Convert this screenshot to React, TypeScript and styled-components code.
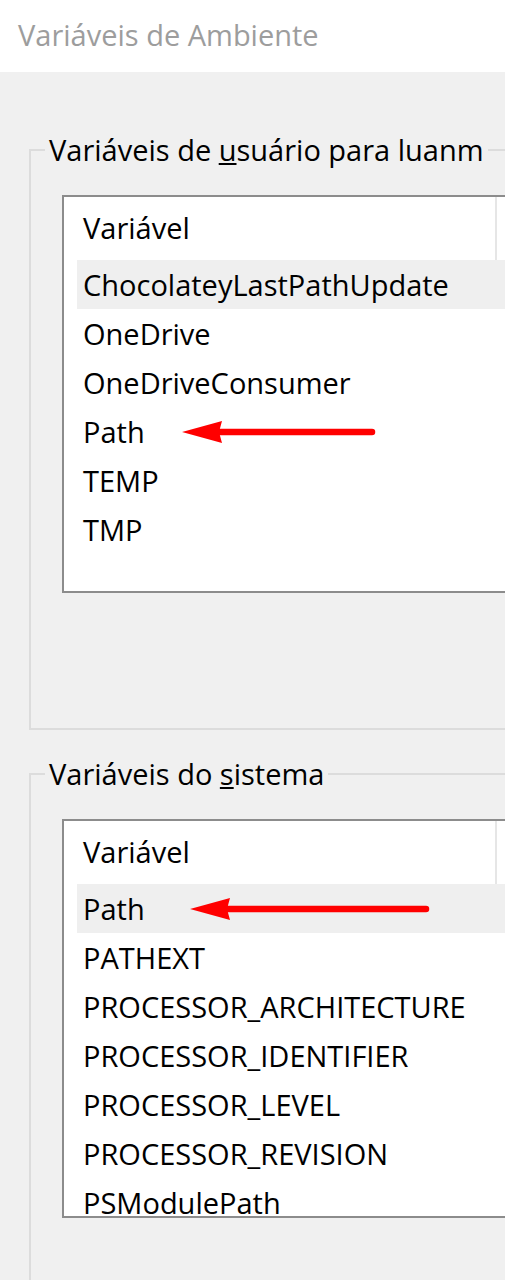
import React from 'react'
import styled, { createGlobalStyle } from 'styled-components'

const GlobalStyle = createGlobalStyle`
  html, body {
    margin: 0;
    padding: 0;
    background: #f0f0f0;
    overflow: hidden;
  }
  body {
    font-family: 'Open Sans', 'Noto Sans', sans-serif;
    color: #000;
  }
`

const Window = styled.div`
  width: 505px;
  height: 1280px;
  overflow: hidden;
  background: #f0f0f0;
`

const TitleBar = styled.div`
  height: 72px;
  background: #fff;
  display: flex;
  align-items: center;
  padding-left: 18px;
  font-size: 29px;
  color: #9d9d9d;
  box-sizing: border-box;
  padding-bottom: 4px;
`

const Body = styled.div`
  padding-top: 60px;
  display: flex;
  flex-direction: column;
  gap: 26px;
`

const GroupBox = styled.fieldset`
  margin: 0 -300px 0 29px;
  border: 2px solid #dcdcdc;
  padding: 27px 0 135px 31px;
  min-width: 0;
`

const Legend = styled.legend`
  margin-left: -17px;
  padding: 0 4px;
  font-size: 29px;
  line-height: 36px;
  white-space: nowrap;
`

type ListViewProps = {
  $height: number
}

const ListView = styled.div<ListViewProps>`
  height: ${ (props) => props.$height }px;
  box-sizing: border-box;
  border: 2px solid #8c8c8c;
  background: #fff;
  overflow: hidden;
`

const Header = styled.div`
  height: 63px;
  display: flex;
  align-items: stretch;
`

const HeaderCell = styled.div`
  width: 433px;
  flex: none;
  display: flex;
  align-items: center;
  padding-left: 19px;
  padding-bottom: 2px;
  box-sizing: border-box;
  border-right: 2px solid #e6e6e6;
  font-size: 29px;
`

const Rows = styled.div`
  padding-left: 13px;
`

type RowProps = {
  $selected?: boolean
}

const Row = styled.div<RowProps>`
  position: relative;
  height: 49px;
  display: flex;
  align-items: center;
  padding-left: 6px;
  font-size: 29px;
  white-space: nowrap;
  background: ${ (props) => props.$selected ? '#efefef' : 'transparent' };
`

const Arrow = styled.svg`
  position: absolute;
  top: 50%;
  transform: translateY(-50%);
  height: 24px;
`

type Variable = {
  name: string
  selected?: boolean
  arrow?: { left: number, width: number }
}

const userVariables: Variable[] = [
  { name: 'ChocolateyLastPathUpdate', selected: true },
  { name: 'OneDrive' },
  { name: 'OneDriveConsumer' },
  { name: 'Path', arrow: { left: 105, width: 194 } },
  { name: 'TEMP' },
  { name: 'TMP' },
]

const systemVariables: Variable[] = [
  { name: 'Path', selected: true, arrow: { left: 113, width: 240 } },
  { name: 'PATHEXT' },
  { name: 'PROCESSOR_ARCHITECTURE' },
  { name: 'PROCESSOR_IDENTIFIER' },
  { name: 'PROCESSOR_LEVEL' },
  { name: 'PROCESSOR_REVISION' },
  { name: 'PSModulePath' },
]

const RedArrow = ({ left, width }: { left: number, width: number }) => (
  <Arrow style={ { left, width } } viewBox={ `0 0 ${ width } 24` }>
    <line x1="30" y1="12" x2={ width - 4 } y2="12" stroke="#f00" strokeWidth="6.5" strokeLinecap="round" />
    <path d="M0 12 L40 1 L37 12 L40 23 Z" fill="#f00" />
  </Arrow>
)

const VariableList = ({ items, height }: { items: Variable[], height: number }) => (
  <ListView $height={ height }>
    <Header>
      <HeaderCell>Variável</HeaderCell>
    </Header>
    <Rows>
      { items.map(item =>
        <Row key={ item.name } $selected={ item.selected }>
          { item.name }
          { item.arrow && <RedArrow left={ item.arrow.left } width={ item.arrow.width } /> }
        </Row>) }
    </Rows>
  </ListView>
)

export default function App() {
  return (
    <Window>
      <GlobalStyle />
      <TitleBar>Variáveis de Ambiente</TitleBar>
      <Body>
        <GroupBox>
          <Legend>Variáveis de <u>u</u>suário para luanm</Legend>
          <VariableList items={ userVariables } height={ 398 } />
        </GroupBox>
        <GroupBox>
          <Legend>Variáveis do <u>s</u>istema</Legend>
          <VariableList items={ systemVariables } height={ 399 } />
        </GroupBox>
      </Body>
    </Window>
  )
}
